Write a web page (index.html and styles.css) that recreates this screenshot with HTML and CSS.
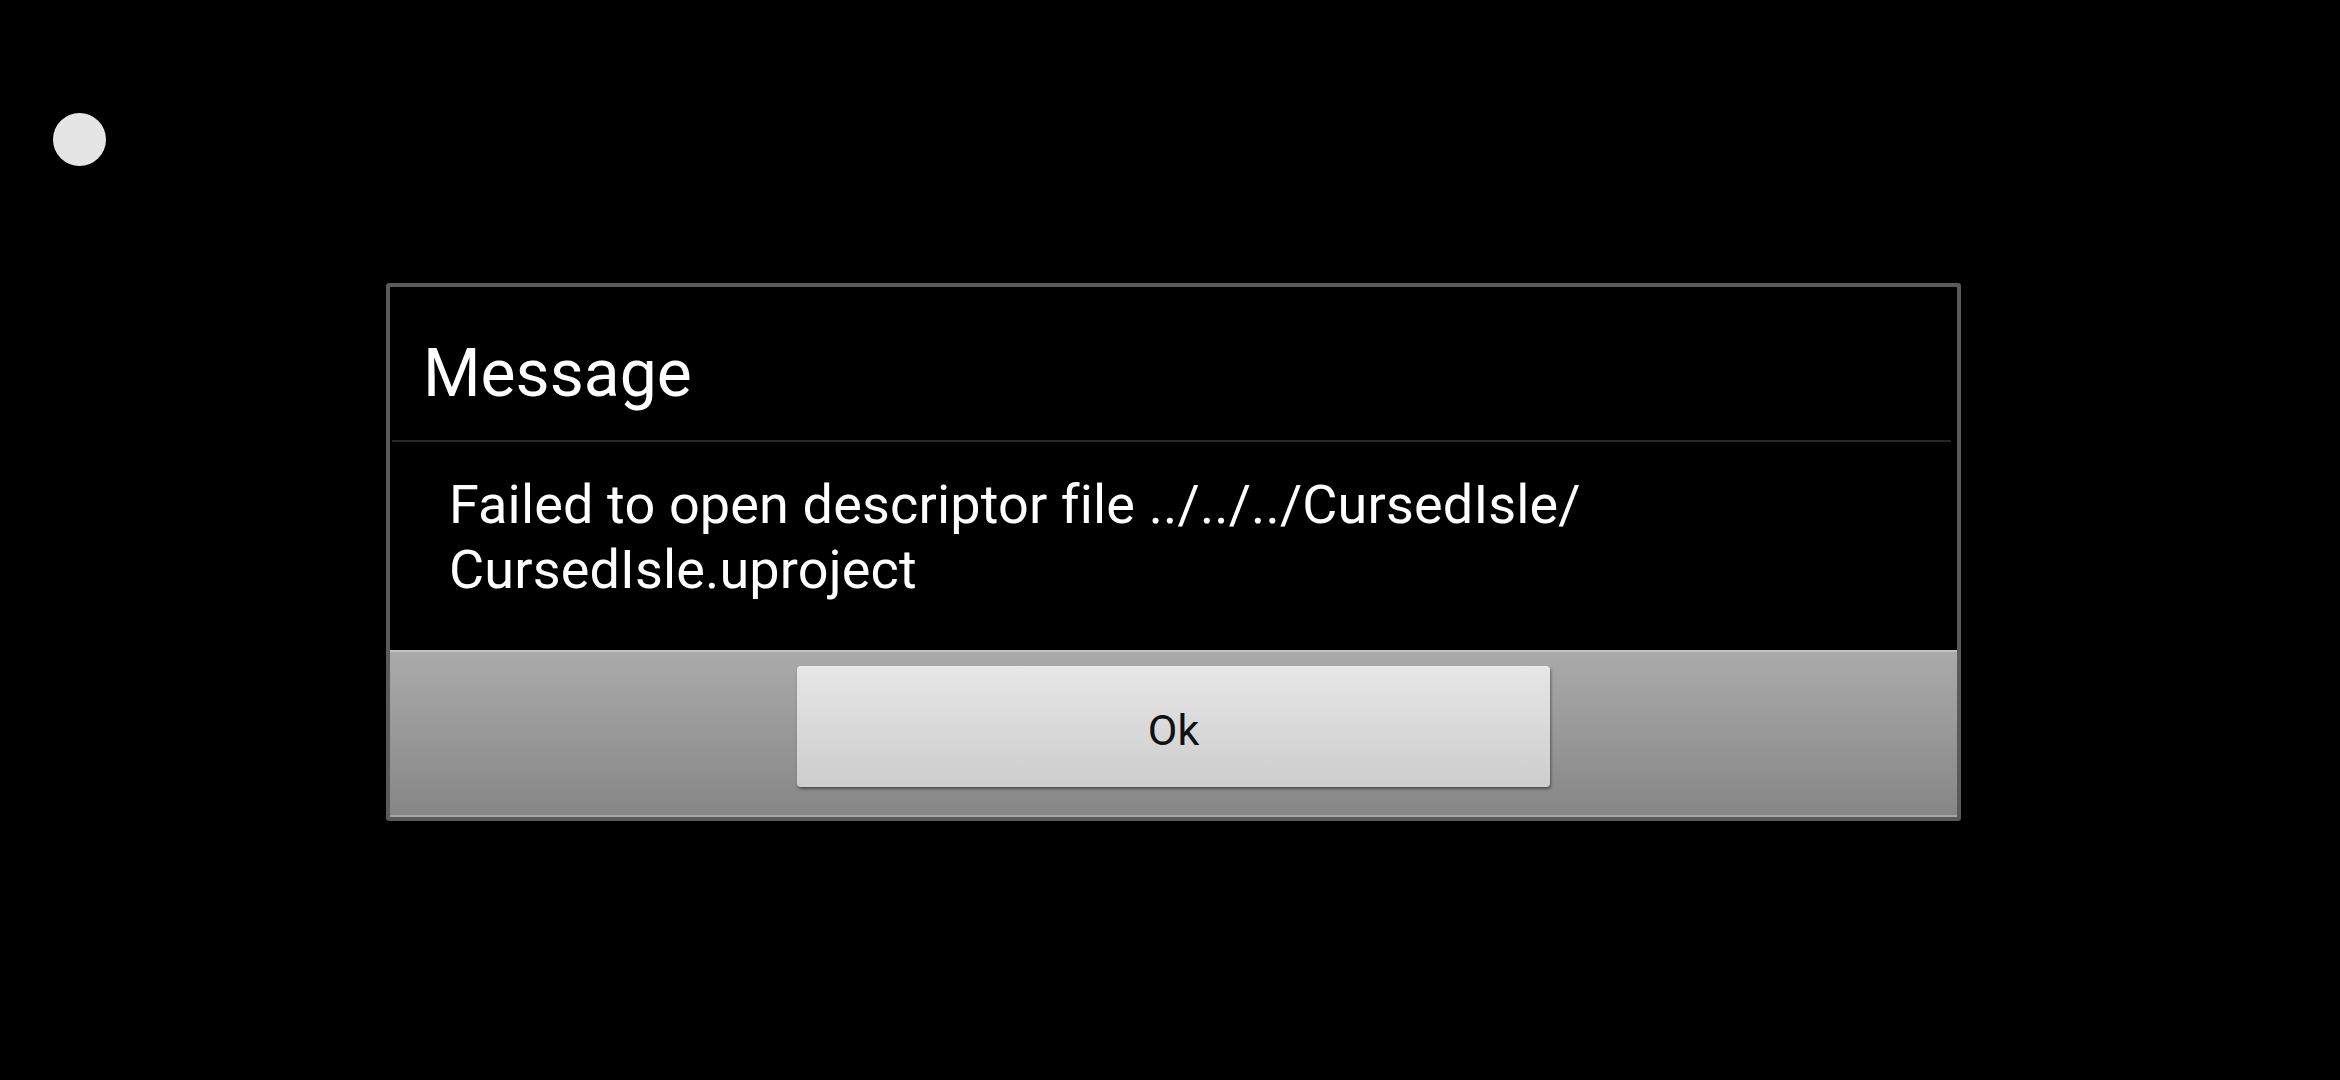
FILE: index.html
```html
<!DOCTYPE html>
<html lang="en">
<head>
    <meta charset="UTF-8">
    <meta name="viewport" content="width=device-width, initial-scale=1.0">
    <title>Message</title>
    <link rel="stylesheet" href="styles.css">
</head>
<body>
    <div class="touch-dot"></div>

    <div class="dialog">
        <div class="dialog-title">Message</div>
        <div class="dialog-sep"></div>
        <div class="dialog-body">
            <p>Failed to open descriptor file ../../../CursedIsle/<br>CursedIsle.uproject</p>
        </div>
        <div class="dialog-footer">
            <button class="btn">Ok</button>
        </div>
    </div>
</body>
</html>
```

FILE: styles.css
```css
* {
    margin: 0;
    padding: 0;
    box-sizing: border-box;
}

body {
    font-family: Roboto, 'Noto Sans', sans-serif;
    background: #000;
    width: 2340px;
    height: 1080px;
    overflow: hidden;
    color: #fff;
    padding: 283px 0 0 386px;
}

/* floating assistive button */
.touch-dot {
    position: absolute;
    left: 53px;
    top: 113px;
    width: 53px;
    height: 53px;
    border-radius: 50%;
    background: #e5e5e5;
}

.dialog {
    width: 1575px;
    border: 4px solid #5a5a5a;
    border-radius: 3px;
    background: #000;
    display: flex;
    flex-direction: column;
}

.dialog-title {
    font-size: 66px;
    line-height: 80px;
    padding: 47px 0 26px 33px;
}

.dialog-sep {
    height: 2px;
    margin: 0 6px 0 2px;
    background: #262626;
}

.dialog-body {
    padding: 30px 0 48px 59px;
    height: 208px;
}

.dialog-body p {
    font-size: 54px;
    line-height: 65px;
    letter-spacing: 0.15px;
}

.dialog-footer {
    height: 167px;
    display: flex;
    justify-content: center;
    align-items: flex-start;
    padding-top: 14px;
    background: linear-gradient(180deg, #aaaaaa 0%, #868686 100%);
    border-top: 2px solid #c2c2c2;
    border-bottom: 2px solid #a4a4a4;
}

.btn {
    width: 753px;
    height: 121px;
    border: none;
    border-top: 1px solid #ededed;
    border-radius: 4px;
    background: linear-gradient(180deg, #e6e6e6 0%, #cdcdcd 100%);
    box-shadow: 1px 2px 3px rgba(0, 0, 0, 0.45);
    font-family: Roboto, 'Noto Sans', sans-serif;
    font-size: 43px;
    color: #111;
    padding-top: 6px;
    cursor: pointer;
}
```
